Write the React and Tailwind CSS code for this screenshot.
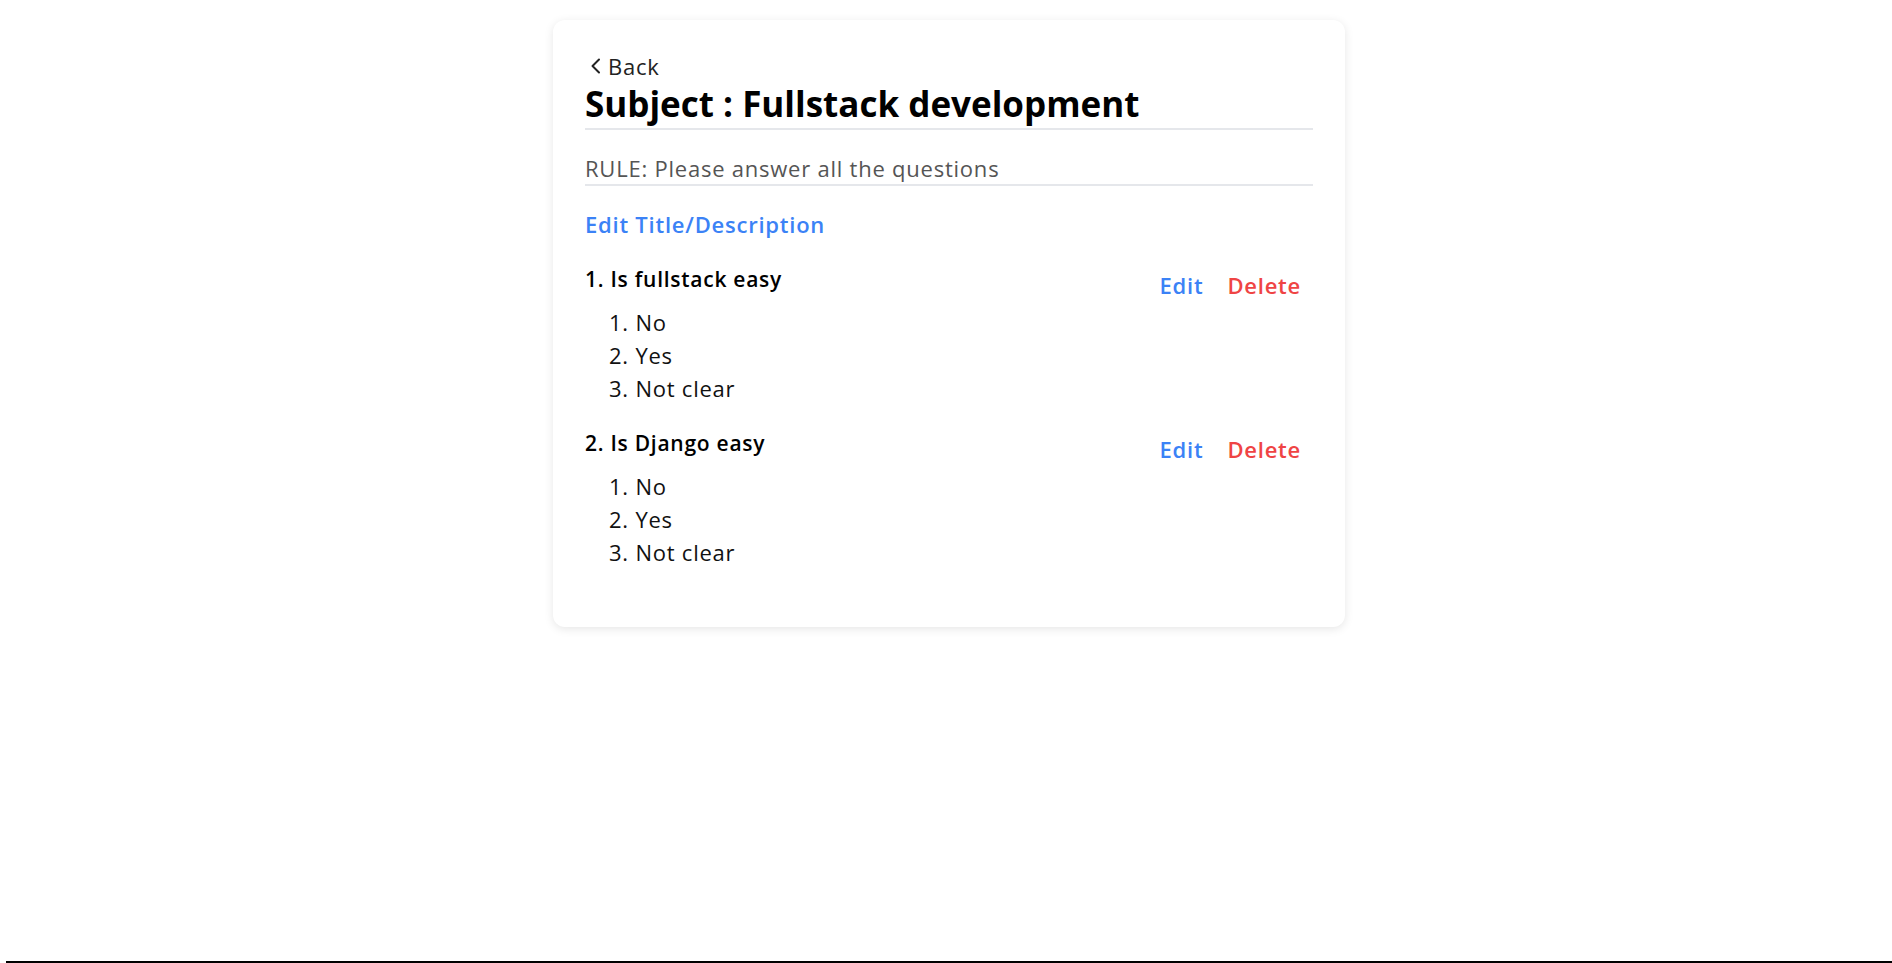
import { useState } from "react";

const questions = [
  { id: 1, title: "Is fullstack easy", options: ["No", "Yes", "Not clear"] },
  { id: 2, title: "Is Django easy", options: ["No", "Yes", "Not clear"] },
];

const Question = ({ index, question }) => {
  return (
    <div className="mb-6">
      <div className="flex items-start justify-between">
        <h3 className="text-[21px] leading-7 font-semibold tracking-[0.035em] text-black">
          {index}. {question.title}
        </h3>
        <div className="flex">
          <button className="px-3 pt-1.5 text-[22px] leading-7 font-semibold tracking-[0.035em] text-[#3b82f6]">
            Edit
          </button>
          <button className="px-3 pt-1.5 text-[22px] leading-7 font-semibold tracking-[0.035em] text-[#ef4444]">
            Delete
          </button>
        </div>
      </div>
      <ol className="mt-[7px] list-inside list-decimal pl-6 text-[22px] leading-[33px] tracking-[0.035em] text-[#111]">
        {question.options.map((option) => (
          <li key={option}>{option}</li>
        ))}
      </ol>
    </div>
  );
};

const App = () => {
  const [items] = useState(questions);

  return (
    <div className="flex min-h-screen flex-col bg-white pl-1.5 font-['Open_Sans',sans-serif]">
      <div className="mx-auto mt-5 w-[792px] rounded-xl bg-white px-8 pt-8 pb-[34px] shadow-[0_2px_10px_rgba(0,0,0,0.1)]">
        <a href="#" className="flex items-center text-[22px] leading-7 tracking-[0.035em] text-[#222]">
          <svg width="23" height="16" viewBox="0 0 23 16" fill="none">
            <path
              d="M14 1.5 L7.5 8 L14 14.5"
              stroke="currentColor"
              strokeWidth="2"
              strokeLinecap="round"
              strokeLinejoin="round"
            />
          </svg>
          Back
        </a>
        <h1 className="mt-1 border-b-2 border-gray-200 pb-1 text-[35px] leading-10 font-bold text-black">
          Subject : Fullstack development
        </h1>
        <p className="mt-6 border-b-2 border-gray-200 pb-0.5 text-[22px] leading-7 tracking-[0.035em] text-[#555]">
          RULE: Please answer all the questions
        </p>
        <button className="mt-6 block text-[22px] leading-7 font-semibold tracking-[0.035em] text-[#3b82f6]">
          Edit Title/Description
        </button>
        <div className="mt-[27px]">
          {items.map((question, i) => (
            <Question key={question.id} index={i + 1} question={question} />
          ))}
        </div>
      </div>
      <div className="mt-auto h-0.5 w-full bg-black" />
    </div>
  );
};

export default App;
